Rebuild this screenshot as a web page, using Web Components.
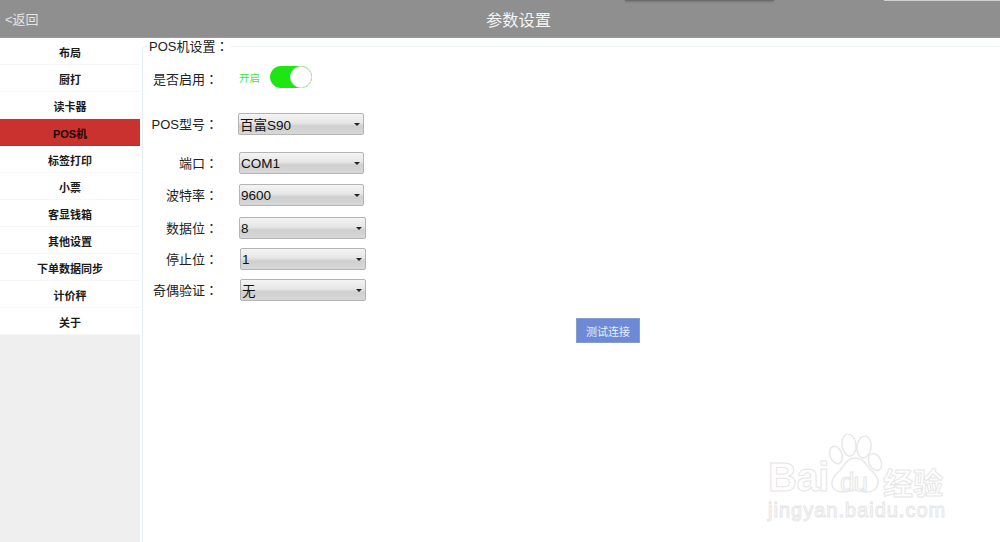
<!DOCTYPE html>
<html>
<head>
<meta charset="utf-8">
<title>参数设置</title>
<style>
    html, body { margin: 0; height: 100%; overflow: hidden; background: #fff; }
    body { font-family: "Liberation Sans", "Noto Sans CJK SC", sans-serif; }
</style>
</head>
<body>
<settings-page>
    <top-bar slot="top" titulo="参数设置" voltar="&lt;返回"></top-bar>
    <side-menu slot="side">
        <menu-item>布局</menu-item>
        <menu-item>厨打</menu-item>
        <menu-item>读卡器</menu-item>
        <menu-item ativo>POS机</menu-item>
        <menu-item>标签打印</menu-item>
        <menu-item>小票</menu-item>
        <menu-item>客显钱箱</menu-item>
        <menu-item>其他设置</menu-item>
        <menu-item>下单数据同步</menu-item>
        <menu-item>计价秤</menu-item>
        <menu-item>关于</menu-item>
    </side-menu>
    <pos-form slot="main"></pos-form>
    <water-mark slot="mark"></water-mark>
</settings-page>

<script>
class settingsPage extends HTMLElement {
    constructor() {
        super();
        this.attachShadow({ mode: 'open' });
        this.shadowRoot.innerHTML = `
            <style>
                :host { display: block; position: relative; width: 1000px; height: 542px; overflow: hidden; }
                .body { display: flex; height: 504px; }
            </style>
            <slot name="top"></slot>
            <div class="body">
                <slot name="side"></slot>
                <slot name="main"></slot>
            </div>
            <slot name="mark"></slot>
        `;
    }
}

class topBar extends HTMLElement {
    constructor() {
        super();
        this.attachShadow({ mode: 'open' });
    }

    connectedCallback() {
        const titulo = this.getAttribute('titulo') || '';
        const voltar = (this.getAttribute('voltar') || '').replace('<', '&lt;');
        this.shadowRoot.innerHTML = `
            <style>
                :host {
                    display: grid;
                    grid-template-columns: 1fr auto 1fr;
                    align-items: center;
                    position: relative;
                    height: 38px;
                    box-sizing: border-box;
                    border-bottom: 1px solid #9a9a9a;
                    background: #8f8f8f;
                    color: #f2f2f2;
                }
                .back { font-size: 13px; padding-left: 5px; color: #e4e4e4; }
                .title { font-size: 16.25px; color: #f4f4f4; margin-left: 37px; }
                /* restos de outras janelas no topo da captura */
                .sombra { position: absolute; left: 625px; top: 0; width: 149px; height: 1px; background: #6b6b6b; box-shadow: 0 1px 2px #6b6b6b; }
                .risco { position: absolute; left: 884px; top: 0; width: 116px; height: 1px; background: #cfcfcf; }
            </style>
            <div class="back">${voltar}</div>
            <div class="title">${titulo}</div>
            <div></div>
            <div class="sombra"></div>
            <div class="risco"></div>
        `;
    }
}

class sideMenu extends HTMLElement {
    constructor() {
        super();
        this.attachShadow({ mode: 'open' });
        this.shadowRoot.innerHTML = `
            <style>
                :host { display: block; flex: none; width: 140px; height: 100%; background: #efefef; }
            </style>
            <slot></slot>
        `;
    }
}

class menuItem extends HTMLElement {
    constructor() {
        super();
        this.attachShadow({ mode: 'open' });
        this.shadowRoot.innerHTML = `
            <style>
                :host {
                    display: flex;
                    align-items: center;
                    justify-content: center;
                    box-sizing: border-box;
                    height: 27px;
                    padding-top: 1px;
                    background: #fff;
                    border-bottom: 1px solid #f6f6f6;
                    color: #1a1a1a;
                    font-size: 11px;
                    font-weight: bold;
                }
                :host([ativo]) { background: #c9322e; border-bottom: 1px solid #9f3a36; color: #1a0505; }
            </style>
            <slot></slot>
        `;
    }
}

class switchToggle extends HTMLElement {
    constructor() {
        super();
        this.attachShadow({ mode: 'open' });
        this.shadowRoot.innerHTML = `
            <style>
                :host { display: flex; align-items: center; gap: 10px; color: #3fe82f; font-size: 10.5px; margin-bottom: 4px; }
                .track { position: relative; width: 42px; height: 22px; border-radius: 11px; background: #1ee614; }
                .knob {
                    position: absolute; right: 0; top: 0;
                    box-sizing: border-box; width: 22px; height: 22px; border-radius: 50%;
                    background: #fff; border: 1px solid #e2e2e2;
                }
            </style>
            <span>开启</span>
            <div class="track"><div class="knob"></div></div>
        `;
    }
}

class fakeSelect extends HTMLElement {
    constructor() {
        super();
        this.attachShadow({ mode: 'open' });
        this.shadowRoot.innerHTML = `
            <style>
                :host {
                    display: flex;
                    align-items: center;
                    justify-content: space-between;
                    box-sizing: border-box;
                    height: 22px;
                    padding: 0 3px 0 1px;
                    border: 1px solid #b4b4b4;
                    border-radius: 2px;
                    background: linear-gradient(#f4f4f4 0%, #e6e6e6 45%, #cfcfcf 60%, #d8d8d8 100%);
                    color: #111;
                    font-size: 13.5px;
                }
                .seta { width: 0; height: 0; border: 3px solid transparent; border-top: 3px solid #222; border-bottom: 0; }
            </style>
            <span><slot></slot></span>
            <span class="seta"></span>
        `;
    }
}

class formRow extends HTMLElement {
    constructor() {
        super();
        this.attachShadow({ mode: 'open' });
    }

    connectedCallback() {
        const rotulo = this.getAttribute('rotulo') || '';
        this.shadowRoot.innerHTML = `
            <style>
                :host { display: flex; align-items: center; height: 22px; }
                .rotulo { width: 75px; padding-bottom: 1px; text-align: right; white-space: nowrap; color: #222; font-size: 13px; flex: none; }
                .dois { font-family: "Noto Sans CJK TC", sans-serif; }
                ::slotted(*) { width: var(--largura, 126px); margin-left: var(--recuo, 20px); }
            </style>
            <span class="rotulo">${rotulo}<span class="dois">：</span></span>
            <slot></slot>
        `;
    }
}

class posForm extends HTMLElement {
    constructor() {
        super();
        this.attachShadow({ mode: 'open' });
        this.shadowRoot.innerHTML = `
            <style>
                :host { display: block; flex: 1; min-width: 0; padding: 0 0 0 2px; }
                fieldset {
                    margin: 0;
                    box-sizing: border-box;
                    height: 520px;
                    padding: 0;
                    border: 0;
                    border-top: 1px solid #eef3f6;
                    border-left: 1px solid #e4eff2;
                    border-top-left-radius: 3px;
                    margin-right: -2px;
                }
                legend { margin-left: 6px; padding: 0 3px 0 0; color: #222; font-size: 13px; line-height: 16px; }
                .dois { font-family: "Noto Sans CJK TC", sans-serif; }
                .linhas { display: flex; flex-direction: column; margin-top: 13px; }
                .r-pos { margin-top: 23px; }
                .r-com { margin-top: 17px; }
                .r-bau { margin-top: 10px; }
                .r-dat { margin-top: 11px; }
                .r-par { margin-top: 9px; }
                .r-ver { margin-top: 9px; }
                .acoes { display: flex; justify-content: center; padding: 17px 0 0 71px; }
            </style>
            <fieldset>
                <legend>POS机设置<span class="dois">：</span></legend>
                <div class="linhas">
                    <form-row rotulo="是否启用" style="--recuo:21px"><switch-toggle></switch-toggle></form-row>
                    <form-row class="r-pos" rotulo="POS型号"><fake-select>百富S90</fake-select></form-row>
                    <form-row class="r-com" rotulo="端口" style="--recuo:21px;--largura:125px"><fake-select>COM1</fake-select></form-row>
                    <form-row class="r-bau" rotulo="波特率" style="--recuo:21px;--largura:125px"><fake-select>9600</fake-select></form-row>
                    <form-row class="r-dat" rotulo="数据位" style="--recuo:21px;--largura:127px"><fake-select>8</fake-select></form-row>
                    <form-row class="r-par" rotulo="停止位" style="--recuo:22px"><fake-select>1</fake-select></form-row>
                    <form-row class="r-ver" rotulo="奇偶验证" style="--recuo:22px"><fake-select>无</fake-select></form-row>
                </div>
                <div class="acoes"><test-button>测试连接</test-button></div>
            </fieldset>
        `;
    }
}

class testButton extends HTMLElement {
    constructor() {
        super();
        this.attachShadow({ mode: 'open' });
        this.shadowRoot.innerHTML = `
            <style>
                :host {
                    display: flex;
                    align-items: center;
                    justify-content: center;
                    box-sizing: border-box;
                    width: 64px;
                    height: 25px;
                    background: #6c8ad6;
                    border: 1px solid #8a9cc8;
                    color: #e8edf8;
                    font-size: 11px;
                }
            </style>
            <slot></slot>
        `;
    }
}

class waterMark extends HTMLElement {
    constructor() {
        super();
        this.attachShadow({ mode: 'open' });
        this.shadowRoot.innerHTML = `
            <style>
                :host {
                    position: absolute;
                    left: 766px;
                    top: 434px;
                    width: 190px;
                    height: 90px;
                    color: #fff;
                    -webkit-text-stroke: 1px #e6e6e6;
                    pointer-events: none;
                }
                svg { position: absolute; left: 0; top: 0; }
                span { position: absolute; white-space: nowrap; line-height: 1; }
                .bai { left: 2px; top: 21px; font: bold 40px "Liberation Sans", sans-serif; letter-spacing: -.5px; }
                .du { left: 74px; top: 33px; font: 26px "Liberation Sans", sans-serif; letter-spacing: -1px; }
                .jy { left: 117px; top: 25px; font: bold 30px "Noto Sans CJK SC", sans-serif; }
                .url { left: 2px; top: 65px; font: 20px "Liberation Sans", sans-serif; letter-spacing: 1px; }
            </style>
            <svg width="190" height="90" viewBox="0 0 190 90" fill="#fff" stroke="#e8e8e8" stroke-width="1.5">
                <ellipse cx="70" cy="21" rx="6" ry="9" transform="rotate(-20 70 21)"/>
                <ellipse cx="83" cy="11" rx="7" ry="11" transform="rotate(-8 83 11)"/>
                <ellipse cx="98" cy="13" rx="7" ry="11" transform="rotate(8 98 13)"/>
                <ellipse cx="109" cy="28" rx="6" ry="9" transform="rotate(-25 109 28)"/>
                <path d="M89 24c8 0 11 6 15 11 5 5 9 9 8 15-1 6-6 8-12 8-4 0-7-2-11-2-4 0-8 2-12 2-7 0-12-4-11-10 1-6 5-8 9-13 4-5 7-11 14-11z"/>
            </svg>
            <span class="bai">Bai</span>
            <span class="du">du</span>
            <span class="jy">经验</span>
            <span class="url">jingyan.baidu.com</span>
        `;
    }
}

customElements.define('settings-page', settingsPage);
customElements.define('top-bar', topBar);
customElements.define('side-menu', sideMenu);
customElements.define('menu-item', menuItem);
customElements.define('switch-toggle', switchToggle);
customElements.define('fake-select', fakeSelect);
customElements.define('form-row', formRow);
customElements.define('pos-form', posForm);
customElements.define('test-button', testButton);
customElements.define('water-mark', waterMark);
</script>
</body>
</html>
